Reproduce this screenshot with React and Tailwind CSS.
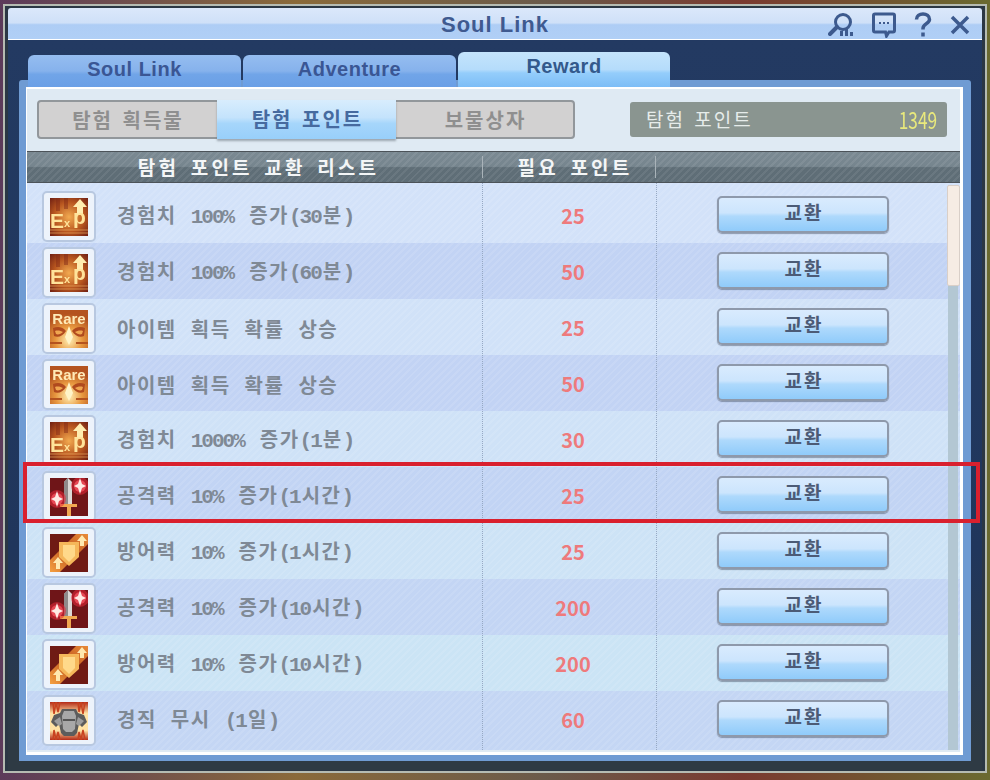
import React from 'react';

const KR = 'font-["Noto_Sans_CJK_KR","Noto_Sans",sans-serif]';
const LATIN = 'font-["Liberation_Sans","Noto_Sans",sans-serif]';
const MONO = 'font-["Liberation_Mono","DejaVu_Sans_Mono",monospace]';
const HATCH =
  'bg-[repeating-linear-gradient(135deg,rgba(255,255,255,0.09)_0px,rgba(255,255,255,0.09)_2px,transparent_2px,transparent_5px)]';

const ExpIcon = () => (
  <svg viewBox="0 0 38 38" className="w-[38px] h-[38px] blur-[0.5px]">
    <defs>
      <radialGradient id="expBg" cx="0.5" cy="0.5" r="0.72">
        <stop offset="0" stopColor="#f2aa50" />
        <stop offset="0.55" stopColor="#b8561f" />
        <stop offset="1" stopColor="#6b1c12" />
      </radialGradient>
    </defs>
    <rect width="38" height="38" fill="url(#expBg)" />
    <path d="M0 32h38M0 35h38" stroke="#f2b468" strokeWidth="1" opacity="0.6" />
    <path d="M8 0v13M16 0v11" stroke="#7d2616" strokeWidth="4" opacity="0.45" />
    <path d="M30 1l7 8h-4v8h-6v-8h-4z" fill="#ffedb0" />
    <text x="0" y="30" fontFamily="Liberation Sans" fontWeight="700" fontSize="21" fill="#ffe39a">E</text>
    <text x="14" y="29" fontFamily="Liberation Sans" fontWeight="700" fontSize="11" fill="#ffe39a">x</text>
    <text x="23" y="26" fontFamily="Liberation Sans" fontWeight="700" fontSize="21" fill="#ffe39a">p</text>
  </svg>
);

const RareIcon = () => (
  <svg viewBox="0 0 38 38" className="w-[38px] h-[38px] blur-[0.5px]">
    <defs>
      <radialGradient id="rareBg" cx="0.5" cy="0.8" r="0.7">
        <stop offset="0" stopColor="#ffeeb4" />
        <stop offset="0.5" stopColor="#e8983f" />
        <stop offset="1" stopColor="#b4531f" />
      </radialGradient>
    </defs>
    <rect width="38" height="38" fill="url(#rareBg)" />
    <text x="19" y="14" textAnchor="middle" fontFamily="Liberation Sans" fontWeight="700" fontSize="15" fill="#ffeab8">Rare</text>
    <path d="M3 18c5-2 10-1 13 3-3 5-8 7-12 5zM35 18c-5-2-10-1-13 3 3 5 8 7 12 5z" fill="#b04a1e" />
    <path d="M5 21c3-1 6 0 8 1-2 2-5 3-7 2zM33 21c-3-1-6 0-8 1 2 2 5 3 7 2z" fill="#f0a650" />
    <path d="M19 16l4 11-4 8-4-8z" fill="#fff4c8" />
    <path d="M0 33h12M26 33h12" stroke="#b4531f" strokeWidth="2" />
  </svg>
);

const Sparkle = ({ x, y, r = 6 }) => (
  <g>
    <circle cx={x} cy={y} r={r + 3} fill="#e8283a" opacity="0.55" />
    <circle cx={x} cy={y} r={r} fill="#f0505c" opacity="0.85" />
    <path
      d={`M${x} ${y - r - 2}L${x + 2} ${y - 2}L${x + r} ${y}L${x + 2} ${y + 2}L${x} ${y + r + 2}L${x - 2} ${y + 2}L${x - r} ${y}L${x - 2} ${y - 2}z`}
      fill="#ffeae4"
    />
  </g>
);

const SwordIcon = () => (
  <svg viewBox="0 0 38 38" className="w-[38px] h-[38px] blur-[0.5px]">
    <rect width="38" height="38" fill="#6f1518" />
    <path d="M18 0l4 4v22h-8V4z" fill="#dbd8d6" />
    <path d="M18 0l-4 4v22h4z" fill="#8f8a8a" />
    <path d="M10 26h17v3h-6v9h-4v-9h-7z" fill="#f0a850" />
    <Sparkle x={30} y={8} />
    <Sparkle x={7} y={21} />
  </svg>
);

const ShieldIcon = () => (
  <svg viewBox="0 0 38 38" className="w-[38px] h-[38px] blur-[0.5px]">
    <defs>
      <linearGradient id="shieldBg" x1="0" y1="1" x2="1" y2="0">
        <stop offset="0" stopColor="#f5a040" />
        <stop offset="0.5" stopColor="#c25a20" />
        <stop offset="1" stopColor="#e88a38" />
      </linearGradient>
    </defs>
    <rect width="38" height="38" fill="#6f1a14" />
    <path d="M0 38L0 26L26 0H38V10L10 38z" fill="url(#shieldBg)" />
    <path d="M9 8h20v15l-10 9-10-9z" fill="#f5b75a" />
    <path d="M13 11h12v11l-6 6-6-6z" fill="#ffd98a" />
    <path d="M32 1l5 6h-3v5h-4v-5h-3z" fill="#ffe9b0" />
    <path d="M8 23l5 6h-3v6H6v-6H3z" fill="#ffe9b0" />
  </svg>
);

const ArmorIcon = () => (
  <svg viewBox="0 0 38 38" className="w-[38px] h-[38px] blur-[0.5px]">
    <defs>
      <linearGradient id="flame" x1="0" y1="0" x2="0" y2="1">
        <stop offset="0" stopColor="#b32a18" />
        <stop offset="0.3" stopColor="#ffe2a4" />
        <stop offset="0.75" stopColor="#ffe2a4" />
        <stop offset="1" stopColor="#b32a18" />
      </linearGradient>
    </defs>
    <rect width="38" height="38" fill="url(#flame)" />
    <path d="M3 0l1 12 2-12 2 10 2-10M28 0l1 10 2-10 2 12 2-12M3 38l1-10 2 10 2-8 2 8M28 38l1-8 2 8 2-10 2 10" stroke="#c8421f" strokeWidth="1.500" fill="none" />
    <path d="M12 7h14l2 4 6 2 3 7-5 5-3-3-2 9-3 3h-10l-3-3-2-9-3 3-5-5 3-7 6-2z" fill="#5c5c5c" />
    <path d="M14 9h10l2 5-1 13-3 3h-6l-3-3-1-13z" fill="#a8a8a8" />
    <path d="M4 19l6-4 2 7-3 2zM34 19l-6-4-2 7 3 2z" fill="#9d9d9d" />
    <path d="M13 17h12v2H13z" fill="#555555" />
  </svg>
);

const rows = [
  { icon: ExpIcon, name: '경험치 100% 증가(30분)', cost: 25, bg: 'bg-[#d3e2f9]' },
  { icon: ExpIcon, name: '경험치 100% 증가(60분)', cost: 50, bg: 'bg-[#c2d3f4]' },
  { icon: RareIcon, name: '아이템 획득 확률 상승', cost: 25, bg: 'bg-[#d1e2f8]' },
  { icon: RareIcon, name: '아이템 획득 확률 상승', cost: 50, bg: 'bg-[#c2d3f4]' },
  { icon: ExpIcon, name: '경험치 1000% 증가(1분)', cost: 30, bg: 'bg-[#cfe2f7]' },
  { icon: SwordIcon, name: '공격력 10% 증가(1시간)', cost: 25, bg: 'bg-[#c2d4f4]' },
  { icon: ShieldIcon, name: '방어력 10% 증가(1시간)', cost: 25, bg: 'bg-[#cde3f6]' },
  { icon: SwordIcon, name: '공격력 10% 증가(10시간)', cost: 200, bg: 'bg-[#c3d5f4]' },
  { icon: ShieldIcon, name: '방어력 10% 증가(10시간)', cost: 200, bg: 'bg-[#cbe4f5]' },
  { icon: ArmorIcon, name: '경직 무시 (1일)', cost: 60, bg: 'bg-[#c4d6f4]' },
];

const TitleIcons = () => (
  <div className="flex items-center gap-[18px] pr-[12px] justify-end text-[#3d5a8e]">
    <svg viewBox="0 0 26 26" className="w-[26px] h-[26px]" fill="none" stroke="currentColor">
      <circle cx="15" cy="10" r="7.500" strokeWidth="3" />
      <path d="M9 15L2 22" strokeWidth="4" strokeLinecap="round" />
      <path d="M13.500 24v-5M18.500 24v-7M23.500 24v-4" strokeWidth="3" />
    </svg>
    <svg viewBox="0 0 24 26" className="w-[24px] h-[26px]" fill="none" stroke="currentColor">
      <path d="M3 2h18a1.500 1.500 0 0 1 1.500 1.500v15a1.500 1.500 0 0 1-1.500 1.500h-4l-2.500 4-1-4H3a1.500 1.500 0 0 1-1.500-1.500v-15A1.500 1.500 0 0 1 3 2z" strokeWidth="3" />
      <path d="M7 11h2M11 11h2M15 11h2" strokeWidth="2" />
    </svg>
    <svg viewBox="0 0 18 26" className="w-[18px] h-[26px]" fill="none" stroke="currentColor">
      <path d="M2.500 7.500C2.500 4 5.500 2 9 2s6.500 2 6.500 5.500c0 4-6.500 4.500-6.500 9v1" strokeWidth="3.500" />
      <path d="M9 20.500v4" strokeWidth="3.500" />
    </svg>
    <svg viewBox="0 0 20 20" className="w-[20px] h-[20px]" fill="none" stroke="currentColor">
      <path d="M2 2l16 16M18 2L2 18" strokeWidth="3.500" />
    </svg>
  </div>
);

const Tab = ({ label, active }) => (
  <div
    className={
      active
        ? `w-[212px] h-[35px] rounded-t-[6px] pb-[7px] flex items-center justify-center text-[20px] font-bold tracking-[0.500px] text-[#33598c] bg-[linear-gradient(180deg,#c4e4fc_0%,#b5dcfb_50%,#94cdfb_60%,#7cbdf6_100%)] ${LATIN}`
        : `w-[213px] h-[32px] rounded-t-[6px] pb-[4px] flex items-center justify-center text-[20px] font-bold tracking-[0.500px] text-[#3a5694] bg-[linear-gradient(180deg,#95bdf0_0%,#86b2ec_50%,#71a5e8_60%,#6a9fe6_100%)] ${LATIN}`
    }
  >
    {label}
  </div>
);

// digits and brackets are half width in the game font, so they get a mono face
const ItemName = ({ text }) => (
  <span className="ml-[21px] text-[20px] font-bold tracking-[1.500px] [word-spacing:8px] text-[#7f8995] whitespace-nowrap">
    {text.split(/([0-9%()]+)/).map((part, i) =>
      i % 2 === 1 ? (
        <span key={i} className={`text-[21px] tracking-[-2px] pr-[2px] ${MONO}`}>
          {part}
        </span>
      ) : (
        part
      ),
    )}
  </span>
);

const Row = ({ row, index }) => {
  const Icon = row.icon;
  const h = index === 0 ? 'h-[60px] pt-[8px]' : index === 9 ? 'h-[59px] pt-[4px]' : 'h-[56px] pt-[4px]';
  return (
    <div className={`${row.bg} ${HATCH} ${h} flex items-start`}>
      <div className="w-[455px] h-[51px] pl-[15px] flex items-center">
        <div className="w-[54px] h-[51px] flex items-center justify-center rounded-[5px] border-2 border-[#b8c8e0] bg-[#edf3fb]">
          <Icon />
        </div>
        <ItemName text={row.name} />
      </div>
      <div className="w-[174px] h-[51px] pl-[8px] pb-[1px] flex items-center justify-center text-[20px] font-bold text-[#ee7a7c]">
        {row.cost}
      </div>
      <div className="flex-1 pl-[61px] pt-[5px]">
        <button className="w-[172px] h-[37px] pb-[9px] pl-[2px] rounded-[5px] border-2 border-[#8e99ab] shadow-[0_1px_1px_rgba(70,80,100,0.5)] bg-[linear-gradient(180deg,#d9ebfe_0%,#cce5fd_45%,#aed9fc_55%,#90cbfa_100%)] text-[19px] font-bold tracking-[2px] text-[#4c5b76]">
          교환
        </button>
      </div>
    </div>
  );
};

export default function App() {
  return (
    <div className={`relative w-[990px] h-[780px] overflow-hidden pt-[4px] pl-[3px] bg-[linear-gradient(90deg,#5c3a5a,#8a6a3a_30%,#6a5a4a_55%,#7a3a30_75%,#6a6a30)] ${KR}`}>
      <div className="w-[984px] h-[769px] border-2 border-[#b5bbb2] bg-[#2b3744] pt-[2px] px-[3px] flex flex-col">
        {/* title bar */}
        <div className="h-[32px] shrink-0 grid grid-cols-[1fr_auto_1fr] items-center rounded-t-[3px] border-b border-white bg-[linear-gradient(180deg,#dbe8fb_0%,#cfe0f8_48%,#aecdf5_54%,#b0cff6_100%)]">
          <div />
          <span className={`text-[22px] font-bold tracking-[1px] text-[#3f5a90] ${LATIN}`}>Soul Link</span>
          <TitleIcons />
        </div>

        <div className="h-[730px] pt-[12px] bg-[linear-gradient(180deg,#233a62_0%,#20365c_70%,#2e3a44_97%)]">
          {/* tabs */}
          <div className="relative z-10 h-[35px] -mb-[7px] ml-[20px] flex items-end gap-[2px]">
            <Tab label="Soul Link" />
            <Tab label="Adventure" />
            <Tab label="Reward" active />
          </div>

          <div className="ml-[11px] w-[952px] h-[681px] pt-[7px] px-[7px] rounded-t-[3px] bg-[#6f9bd3]">
            <div className="relative z-20 w-[937px] h-[668px] border-t-2 border-l border-r-[3px] border-b-[3px] border-white bg-[#dfeaf3] flex flex-col">
              {/* sub tabs + points */}
              <div className="h-[39px] mt-[11px] pl-[10px] pr-[13px] flex items-center justify-between shrink-0">
                <div className="flex h-[39px] w-[538px] rounded-[4px] border-2 border-[#92979b] bg-[#d2d1d1] text-[20px] font-bold tracking-[2px] [word-spacing:3px] text-[#8f8f8f]">
                  <div className="w-[178px] flex items-center justify-center">탐험 획득물</div>
                  <div className="w-[179px] pb-[2px] pl-[2px] -my-[2px] flex items-center justify-center text-[#466a9f] shadow-[0_2px_2px_rgba(90,100,110,0.5)] bg-[linear-gradient(180deg,#d8edfd_0%,#c4e3fc_45%,#a6d6fb_60%,#98cffa_100%)]">
                    탐험 포인트
                  </div>
                  <div className="w-[177px] pl-[2px] flex items-center justify-center">보물상자</div>
                </div>
                <div className="w-[317px] h-[35px] pl-[16px] pr-[10px] flex items-center justify-between rounded-[3px] bg-[#8a9590] text-[19px] tracking-[2px] [word-spacing:3px] text-[#e6ecea]">
                  <span>탐험 포인트</span>
                  <span className="inline-block origin-right scale-x-[0.75] text-[23px] tracking-normal text-[#e9e97c]">1349</span>
                </div>
              </div>

              {/* list header */}
              <div className="mt-[12px] h-[32px] shrink-0 flex items-center border-t border-b border-[#4c5359] bg-[repeating-linear-gradient(135deg,rgba(255,255,255,0.07)_0px,rgba(255,255,255,0.07)_2px,transparent_2px,transparent_5px),linear-gradient(180deg,#7a8992_0%,#76858e_48%,#5f6e77_52%,#5e6d76_100%)] text-[19px] font-bold tracking-[3.200px] [word-spacing:4px] text-[#f4f6f7]">
                <div className="w-[455px] pl-[8px] text-center">탐험 포인트 교환 리스트</div>
                <div className="w-[174px] pl-[12px] h-[22px] flex items-center justify-center border-l border-r border-[#a9b3b9]">필요 포인트</div>
              </div>

              {/* rows */}
              <div className="relative flex-1">
                {rows.map((row, i) => (
                  <Row key={i} row={row} index={i} />
                ))}
                <div className="absolute top-0 bottom-[2px] left-[455px] border-l border-dotted border-[#97a9c4]" />
                <div className="absolute top-0 bottom-[2px] left-[629px] border-l border-dotted border-[#97a9c4]" />
                {/* scrollbar */}
                <div className="absolute top-[2px] bottom-[2px] right-[2px] w-[10px] bg-[#b3c7d3]" />
                <div className="absolute top-[2px] right-0 w-[13px] h-[101px] rounded-[2px] border border-[#d9cfc8] bg-[#f6ece4]" />
              </div>
            </div>
          </div>
        </div>
      </div>

      {/* red highlight */}
      <div className="absolute z-30 left-[23px] top-[462px] w-[957px] h-[61px] border-[4px] border-[#d9202e]" />
    </div>
  );
}
